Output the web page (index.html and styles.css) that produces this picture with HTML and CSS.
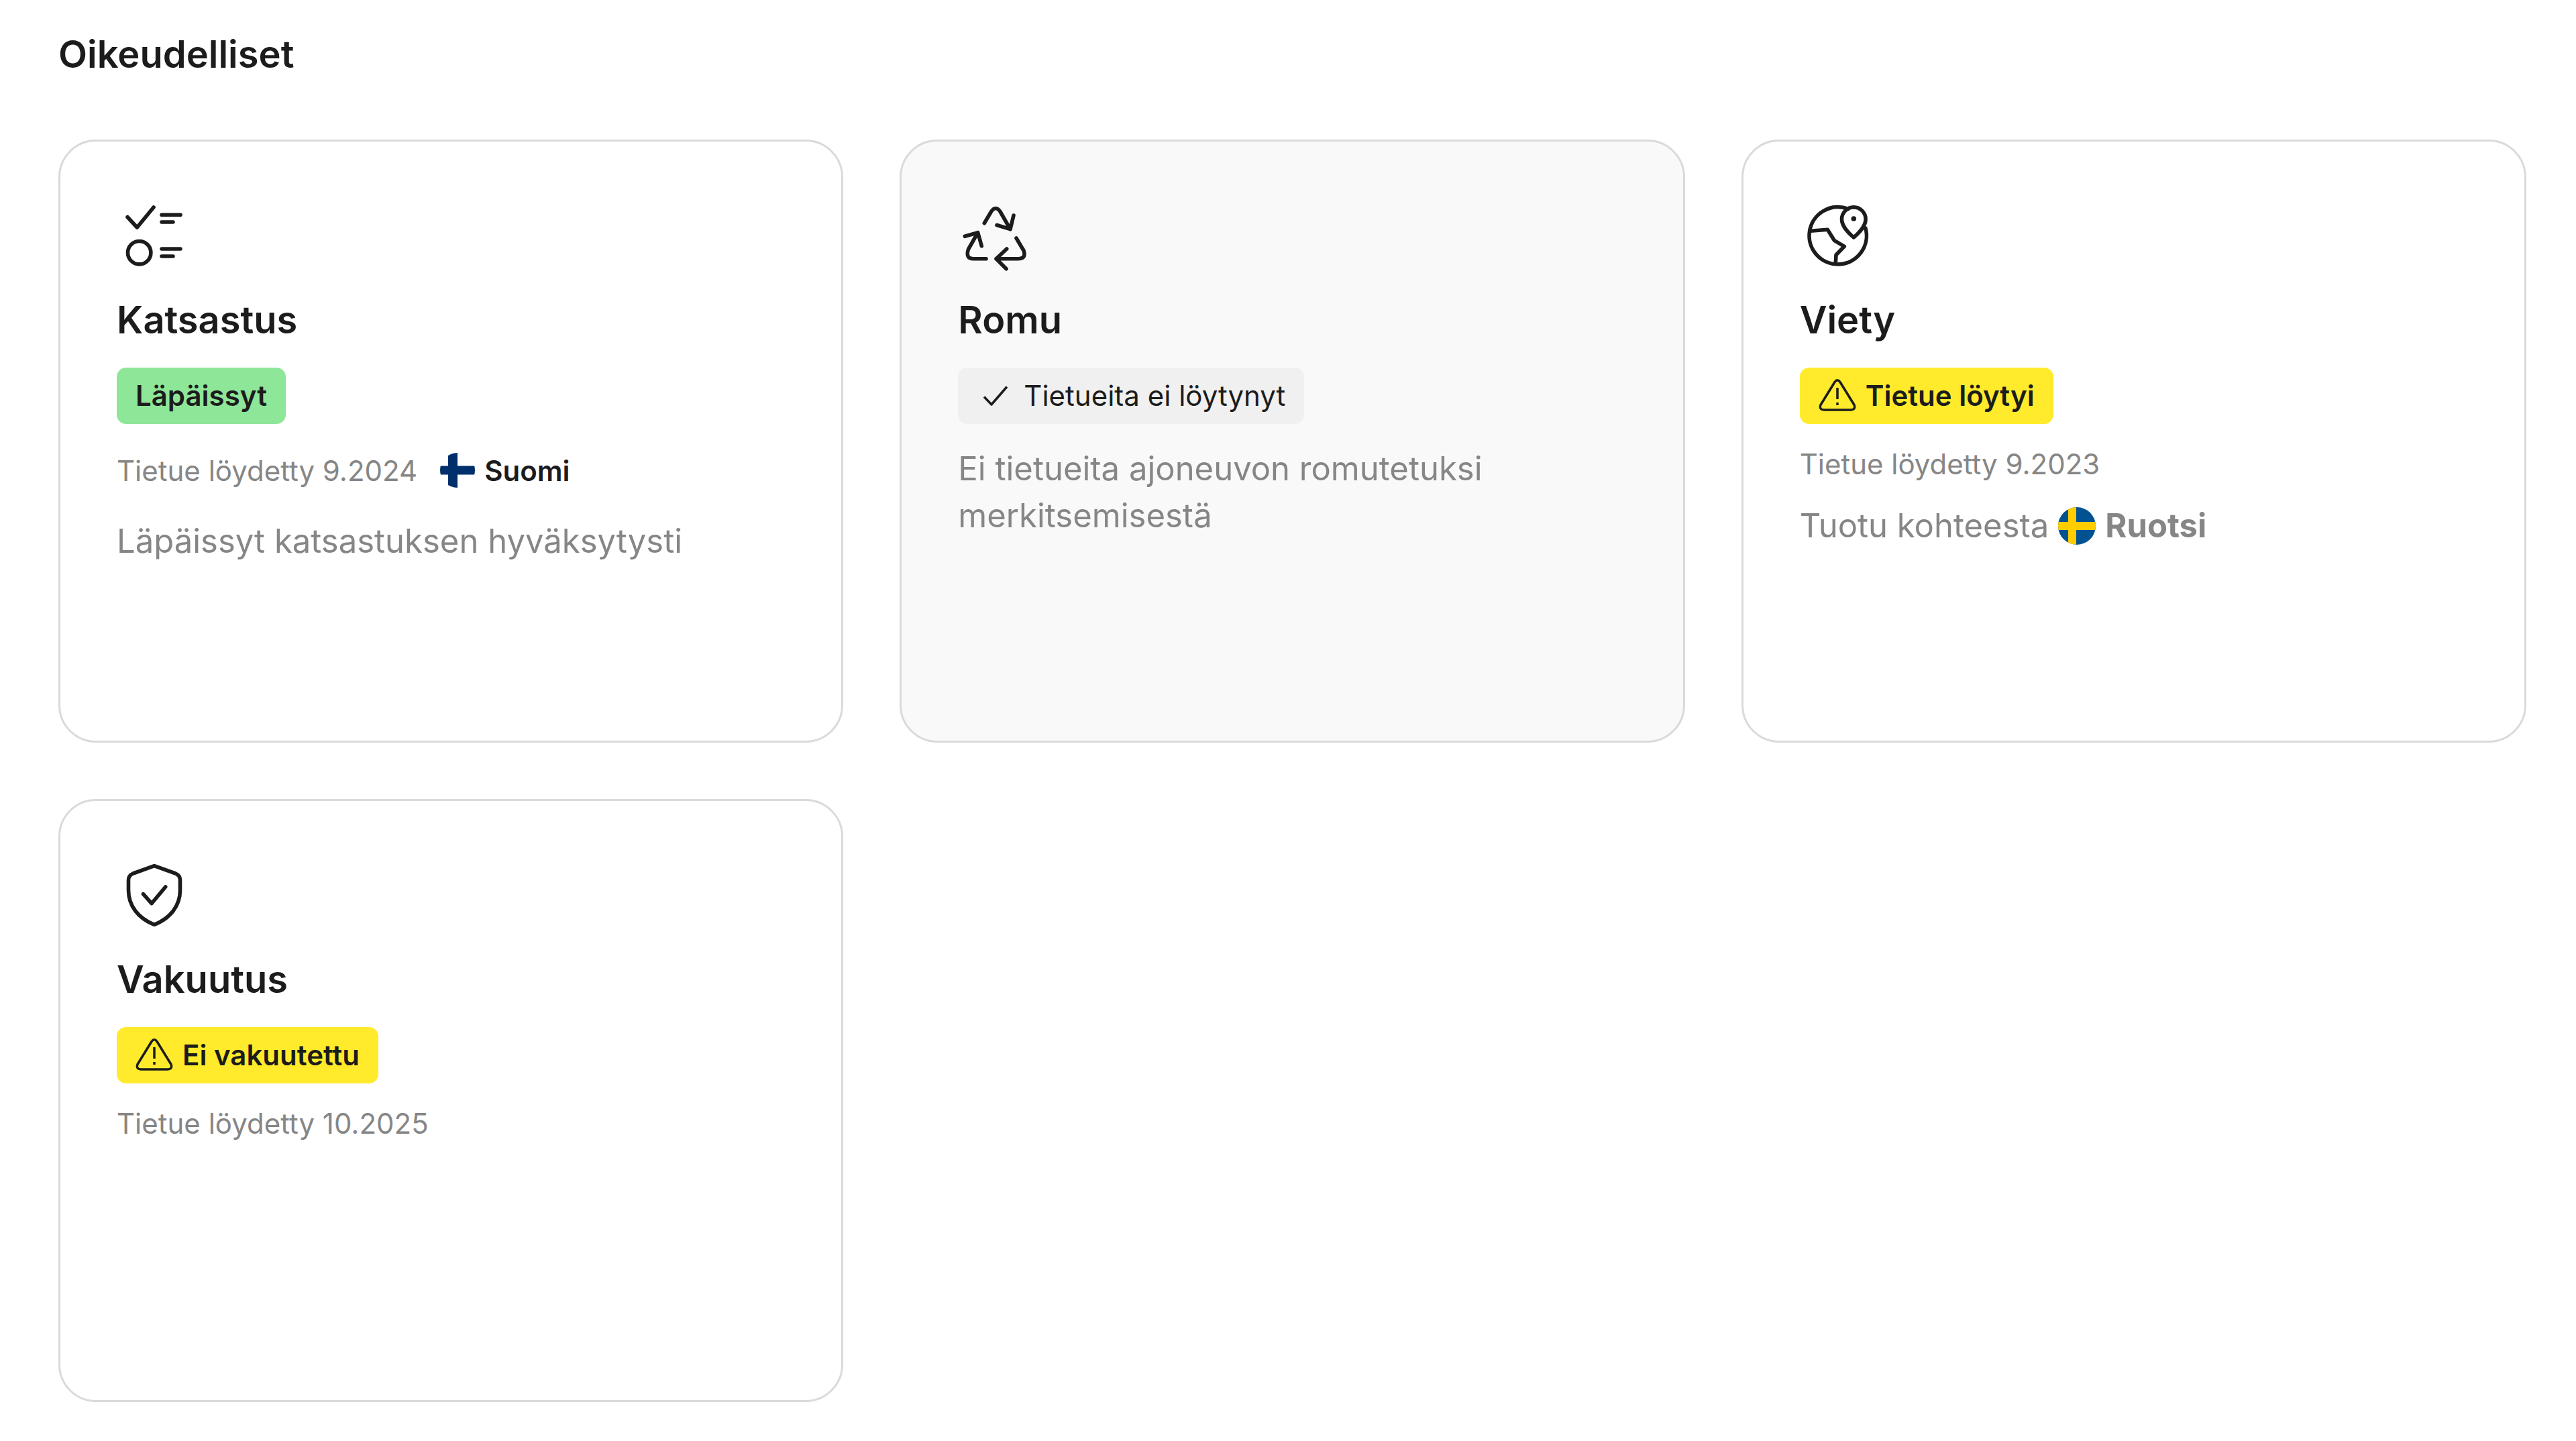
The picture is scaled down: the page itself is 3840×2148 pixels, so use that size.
FILE: index.html
```html
<!DOCTYPE html>
<html lang="fi">

<head>
  <meta charset="UTF-8">
  <meta name="viewport" content="width=device-width, initial-scale=1.0">
  <title>Oikeudelliset</title>
  <link rel="stylesheet" href="styles.css">
</head>

<body>
  <section class="legal">
    <h2>Oikeudelliset</h2>

    <div class="cards">
      <!-- Katsastus -->
      <article class="card">
        <svg class="icon" viewBox="0 0 112 112" aria-hidden="true">
          <path d="M16 28.5L30.3 44L55 14M67 25.3H95M67 36H84M67 76H95M67 87H84" />
          <circle cx="33.7" cy="81.7" r="17.2" />
        </svg>
        <h3>Katsastus</h3>
        <span class="badge badge-green">Läpäissyt</span>
        <div class="meta">
          <span class="date">Tietue löydetty 9.2024</span>
          <span class="country">
            <svg class="flag" viewBox="0 0 52 52" aria-hidden="true">
              <clipPath id="fi"><circle cx="26" cy="26" r="26" /></clipPath>
              <g clip-path="url(#fi)">
                <path fill="#fff" d="M0 0H52V52H0z" />
                <path fill="#002f6c" d="M12 0H26V52H12zM0 19.5H52V32.5H0z" />
              </g>
            </svg>
            Suomi
          </span>
        </div>
        <p class="text">Läpäissyt katsastuksen hyväksytysti</p>
      </article>

      <!-- Romu -->
      <article class="card card-muted">
        <svg class="icon" viewBox="0 0 112 112" aria-hidden="true">
          <path d="M39.3 37.7L49.5 20.5Q56.3 10.5 63 20.5L78 46.7M83 26L78 46.7L58 40.5" />
          <path d="M10.3 57.3L29.7 51.7L35.3 71.7M29.7 51.7L15.5 76.5Q11 90.7 23 90.7H42" />
          <path d="M87 60L98 78.5Q102 90.7 90 90.7H57M72.7 76L57 90.7L72 105.7" />
        </svg>
        <h3>Romu</h3>
        <span class="badge badge-grey">
          <svg class="badge-icon" viewBox="0 0 56 56" aria-hidden="true">
            <path d="M11 30.5L22 42L45 15.5" />
          </svg>
          Tietueita ei löytynyt
        </span>
        <p class="text">Ei tietueita ajoneuvon romutetuksi merkitsemisestä</p>
      </article>

      <!-- Viety -->
      <article class="card">
        <svg class="icon" viewBox="0 0 112 112" aria-hidden="true">
          <path d="M72 16.4A42.7 42.7 0 1 0 97.9 45" />
          <path d="M80.3 59C70 50 62.5 41.5 62.5 31.7A17.8 17.8 0 0 1 98.1 31.7C98.1 41.5 90.5 50 80.3 59z" />
          <path d="M16 49.3L41.3 47.3L51.3 63.3L66.3 72.3L54 85L53.3 98" />
          <circle class="dot" cx="80.3" cy="31" r="3.8" />
        </svg>
        <h3>Viety</h3>
        <span class="badge badge-yellow">
          <svg class="badge-icon" viewBox="0 0 56 56" aria-hidden="true">
            <path d="M24 8.5Q28 3 32 8.5L53 42.500Q55.5 49.5 48 50H8Q.5 49.5 3 42.5zM28 17V34M28 39V43" />
          </svg>
          Tietue löytyi
        </span>
        <p class="date">Tietue löydetty 9.2023</p>
        <p class="text origin">
          Tuotu kohteesta
          <svg class="flag flag-large" viewBox="0 0 56 56" aria-hidden="true">
            <clipPath id="se"><circle cx="28" cy="28" r="28" /></clipPath>
            <g clip-path="url(#se)">
              <path fill="#005293" d="M0 0H56V56H0z" />
              <path fill="#ffcd00" d="M15 0H27V56H15zM0 22H56V34H0z" />
            </g>
          </svg>
          <strong>Ruotsi</strong>
        </p>
      </article>

      <!-- Vakuutus -->
      <article class="card">
        <svg class="icon" viewBox="0 0 112 112" aria-hidden="true">
          <path d="M56 12.7L87.5 24Q94.5 27 94.5 34V49C94.5 72 80 91 56 100.3C32 91 17.5 72 17.5 49V34Q17.5 27 24.5 24z" />
          <path d="M39.5 54.7L52 68.7L72.7 44" />
        </svg>
        <h3>Vakuutus</h3>
        <span class="badge badge-yellow">
          <svg class="badge-icon" viewBox="0 0 56 56" aria-hidden="true">
            <path d="M24 8.5Q28 3 32 8.5L53 42.5Q55.5 49.5 48 50H8Q.5 49.5 3 42.5zM28 17V34M28 39V43" />
          </svg>
          Ei vakuutettu
        </span>
        <p class="date">Tietue löydetty 10.2025</p>
      </article>
    </div>
  </section>
</body>

</html>
```
FILE: styles.css
```css
* {
  box-sizing: border-box;
}

body {
  margin: 0;
  background-color: #ffffff;
  color: #1c1c1c;
  font-family: Inter, "Liberation Sans", sans-serif;
}

h2,
h3,
p {
  margin: 0;
}

.legal {
  padding: 39px 74px 58px 87px;
}

h2,
h3 {
  font-size: 56px;
  line-height: 84px;
  font-weight: 600;
}

h2 {
  margin-bottom: 85px;
}

.cards {
  display: grid;
  grid-template-columns: repeat(3, 1fr);
  gap: 84px;
}

.card {
  display: flex;
  flex-direction: column;
  align-items: flex-start;
  min-height: 899px;
  padding: 84px;
  border: 3px solid #dadada;
  border-radius: 56px;
}

.card-muted {
  background-color: #f9f9f9;
}

.icon {
  width: 112px;
  height: 112px;
  margin-bottom: 28px;
  fill: none;
  stroke: #1c1c1c;
  stroke-width: 5.6;
  stroke-linecap: round;
  stroke-linejoin: round;
}

.icon .dot {
  fill: #1c1c1c;
  stroke: none;
}

h3 {
  margin-bottom: 29px;
}

.badge {
  display: flex;
  align-items: center;
  gap: 14px;
  height: 84px;
  margin-bottom: 28px;
  padding: 0 28px 2px;
  border-radius: 14px;
  font-size: 42px;
  font-weight: 600;
}

.badge-green {
  background-color: #8ee699;
}

.badge-yellow {
  background-color: #ffeb2b;
}

.badge-grey {
  background-color: #f0f0f0;
  font-weight: 400;
}

.badge-icon {
  width: 56px;
  height: 56px;
  fill: none;
  stroke: #1c1c1c;
  stroke-width: 3.5;
  stroke-linejoin: round;
}

.meta {
  display: flex;
  align-items: center;
  gap: 34px;
  height: 82px;
  margin-bottom: 30px;
}

.date {
  color: #868686;
  font-size: 42px;
  line-height: 63px;
}

.country {
  display: flex;
  align-items: center;
  gap: 14px;
  font-size: 42px;
  font-weight: 600;
}

.flag {
  width: 52px;
  height: 52px;
}

.flag-large {
  width: 56px;
  height: 56px;
}

.text {
  color: #868686;
  font-size: 49px;
  line-height: 70px;
}

.badge + .text {
  margin-top: 4px;
}

.origin {
  display: flex;
  align-items: center;
  gap: 14px;
  margin-top: 26px;
}
```
